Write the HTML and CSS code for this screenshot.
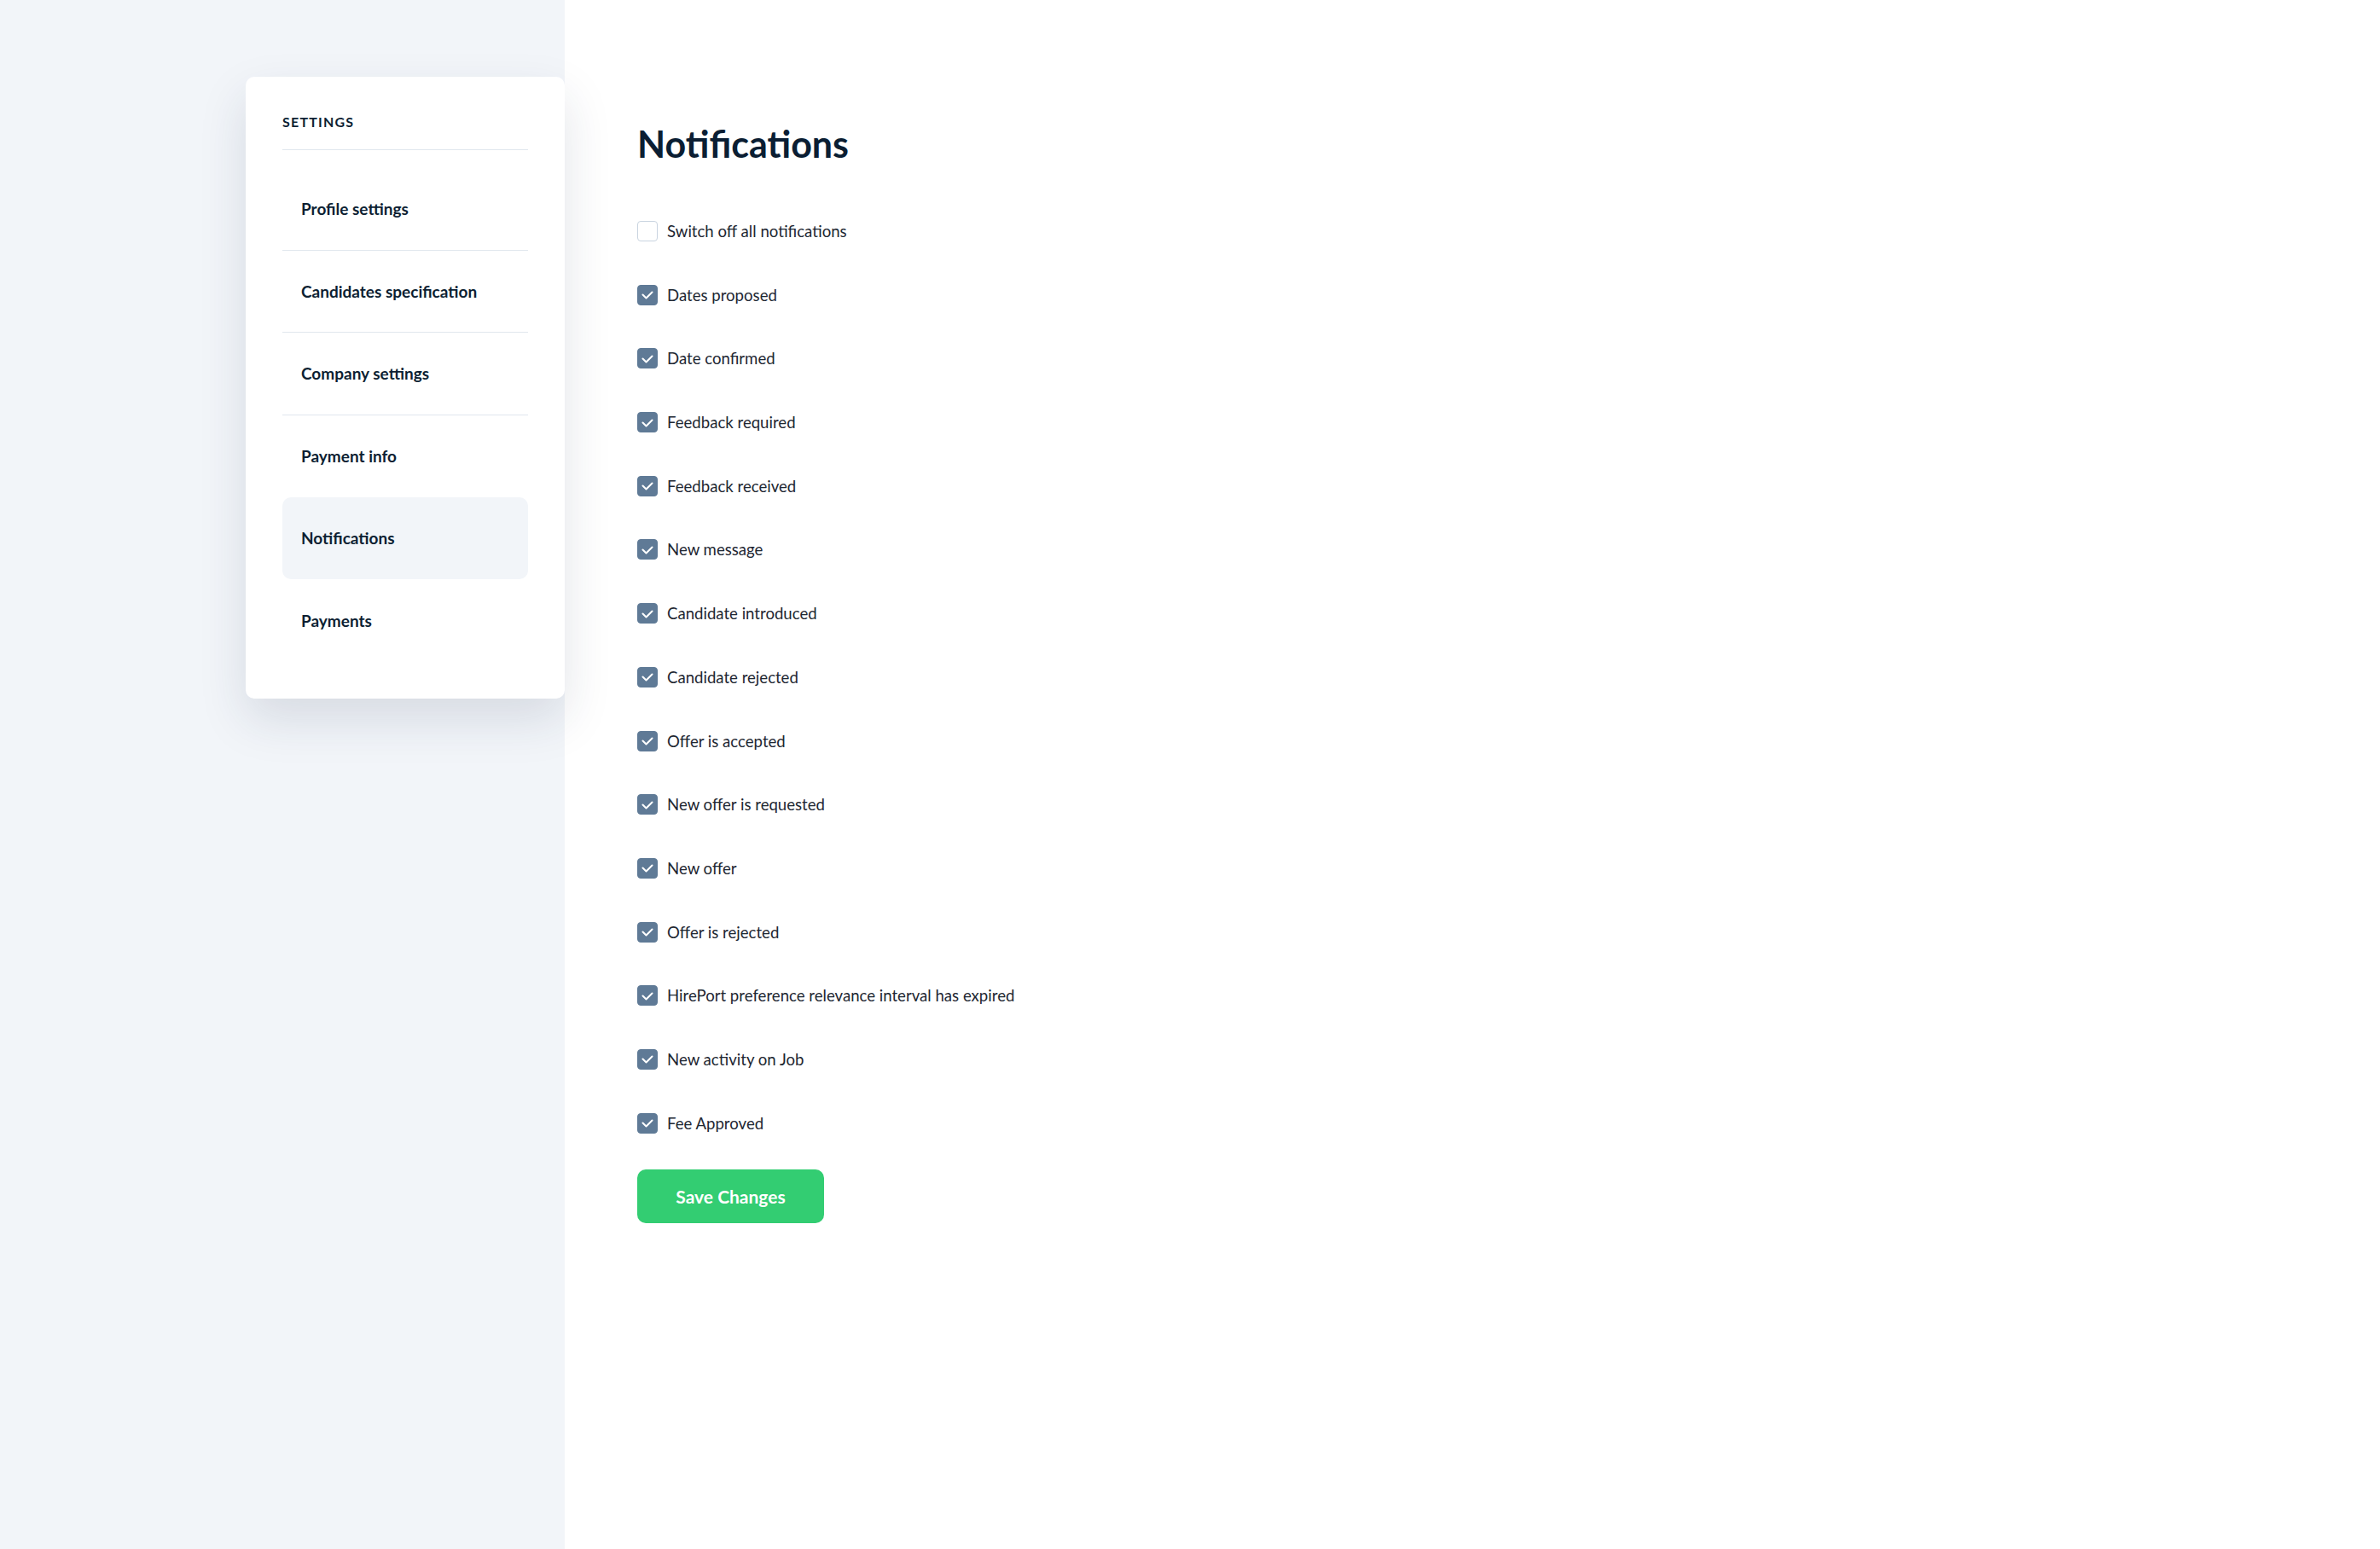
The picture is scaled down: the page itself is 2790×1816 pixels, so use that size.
FILE: index.html
```html
<!DOCTYPE html>
<html lang="en">
<head>
    <meta charset="UTF-8">
    <meta name="viewport" content="width=device-width, initial-scale=1.0">
    <title>Notifications</title>
    <link rel="stylesheet" href="styles.css">
</head>
<body>
    <aside class="sidebar">
        <nav class="settings-card">
            <div class="settings-title">Settings</div>
            <ul class="settings-menu">
                <li class="menu-item with-line"><a href="#">Profile settings</a></li>
                <li class="menu-item with-line"><a href="#">Candidates specification</a></li>
                <li class="menu-item with-line"><a href="#">Company settings</a></li>
                <li class="menu-item"><a href="#">Payment info</a></li>
                <li class="menu-item active"><a href="#">Notifications</a></li>
                <li class="menu-item"><a href="#">Payments</a></li>
            </ul>
        </nav>
    </aside>

    <main class="content">
        <h1>Notifications</h1>
        <form id="notificationsForm">
            <div class="options" id="options"></div>
            <button type="submit" class="btn-save">Save Changes</button>
        </form>
    </main>

    <script>
        const options = [
            ['Switch off all notifications', false],
            ['Dates proposed', true],
            ['Date confirmed', true],
            ['Feedback required', true],
            ['Feedback received', true],
            ['New message', true],
            ['Candidate introduced', true],
            ['Candidate rejected', true],
            ['Offer is accepted', true],
            ['New offer is requested', true],
            ['New offer', true],
            ['Offer is rejected', true],
            ['HirePort preference relevance interval has expired', true],
            ['New activity on Job', true],
            ['Fee Approved', true]
        ];

        const list = document.getElementById('options');
        options.forEach(function (item, i) {
            const label = document.createElement('label');
            label.className = 'option';
            label.innerHTML =
                '<input type="checkbox" id="opt' + i + '"' + (item[1] ? ' checked' : '') + '>' +
                '<span class="box"><svg viewBox="0 0 24 24"><polyline points="6.5,12.5 10.5,16.5 17.5,9.5"/></svg></span>' +
                '<span class="text"></span>';
            label.querySelector('.text').textContent = item[0];
            list.appendChild(label);
        });

        document.getElementById('notificationsForm').addEventListener('submit', function (event) {
            event.preventDefault();
        });
    </script>
</body>
</html>
```

FILE: styles.css
```css
body {
    margin: 0;
    font-family: Lato, "Open Sans", sans-serif;
    color: #0d1f33;
    background-color: #fff;
    display: flex;
    min-height: 100vh;
}
.sidebar {
    width: 662px;
    flex-shrink: 0;
    box-sizing: border-box;
    padding: 90px 0 0 288px;
    background-color: #f2f5f9;
}
.settings-card {
    position: relative;
    z-index: 1;
    background: #fff;
    border-radius: 10px;
    padding: 43px;
    box-shadow: 0 24px 56px rgba(30, 48, 76, 0.13);
}
.settings-title {
    font-size: 16px;
    line-height: 20px;
    font-weight: 700;
    letter-spacing: 1.2px;
    text-transform: uppercase;
    padding-bottom: 22px;
    border-bottom: 1px solid #e1e7ee;
}
.settings-menu {
    list-style: none;
    margin: 21px 0 0;
    padding: 0;
}
.menu-item {
    border-bottom: 1px solid transparent;
}
.menu-item.with-line {
    border-bottom-color: #e1e7ee;
}
.menu-item a {
    display: flex;
    align-items: center;
    height: 95.5px;
    padding: 0 22px;
    font-size: 19px;
    font-weight: 700;
    color: #0d1f33;
    text-decoration: none;
    border-radius: 10px;
}
.menu-item.active a {
    background-color: #f2f5f9;
}

.content {
    flex: 1;
    padding: 143px 0 0 85px;
}
.content h1 {
    margin: 0;
    font-size: 43px;
    line-height: 52px;
    font-weight: 700;
    color: #0b1e33;
}
.options {
    display: flex;
    flex-direction: column;
    gap: 50.7px;
    margin-top: 64px;
}
.option {
    display: flex;
    align-items: center;
    gap: 11px;
    cursor: pointer;
}
.option input {
    display: none;
}
.option .box {
    width: 24px;
    height: 24px;
    box-sizing: border-box;
    border: 1.5px solid #c9d4e0;
    border-radius: 4px;
    background: #fff;
}
.option .box svg {
    display: none;
    width: 24px;
    height: 24px;
    margin: -1.5px;
}
.option .box polyline {
    fill: none;
    stroke: #fff;
    stroke-width: 2;
    stroke-linecap: round;
    stroke-linejoin: round;
}
.option input:checked + .box {
    background: #5f7a96;
    border-color: #5f7a96;
}
.option input:checked + .box svg {
    display: block;
}
.option .text {
    font-size: 18.6px;
    line-height: 24px;
    color: #1e2732;
}
.btn-save {
    display: block;
    margin-top: 42px;
    width: 219px;
    height: 63px;
    padding: 0;
    background-color: #33cd72;
    color: #fff;
    border: none;
    border-radius: 10px;
    font-family: Lato, sans-serif;
    font-size: 21px;
    font-weight: 700;
    cursor: pointer;
}
.btn-save:hover {
    background-color: #2dbd68;
}
```
